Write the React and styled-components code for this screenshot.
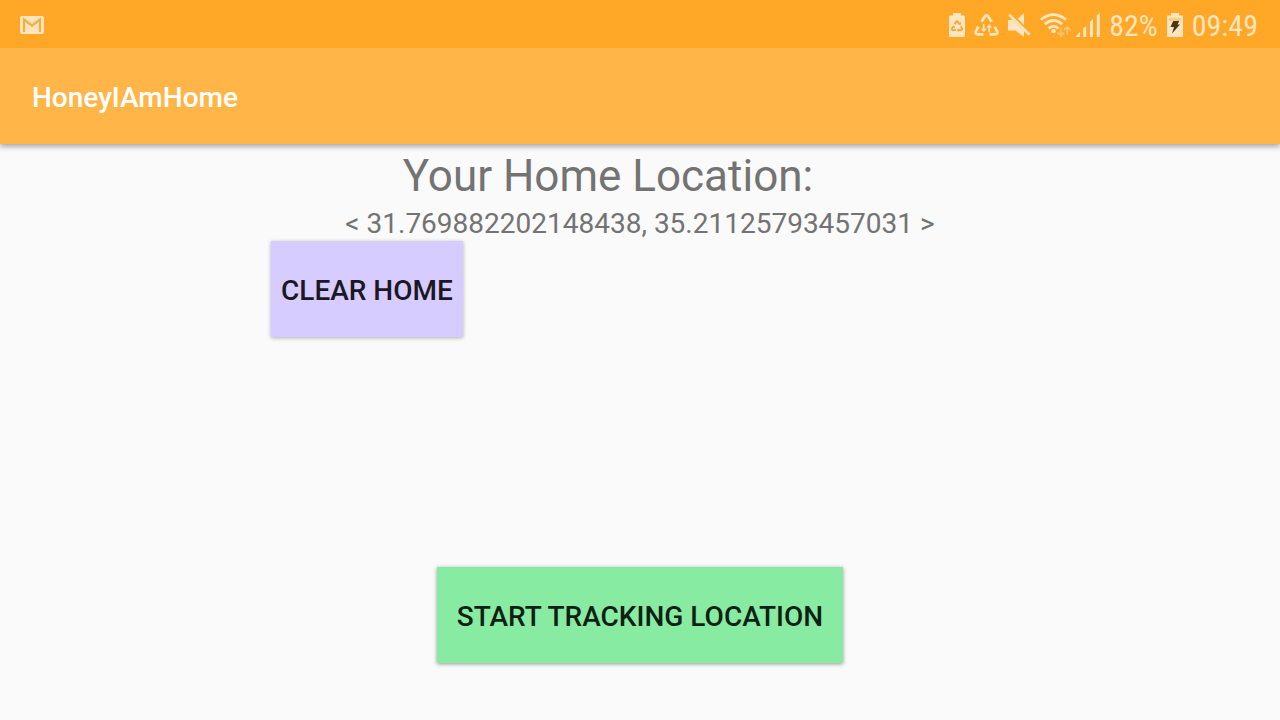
import React from "react";
import styled, { createGlobalStyle } from "styled-components";

const GlobalStyle = createGlobalStyle`
  *, *::before, *::after { box-sizing: border-box; }
  body {
    margin: 0;
    background: #fafafa;
    font-family: Roboto, "Liberation Sans", sans-serif;
  }
`;

const Screen = styled.div`
  min-height: 100vh;
  display: flex;
  flex-direction: column;
`;

const StatusBar = styled.div`
  position: relative;
  z-index: 1;
  height: 48px;
  padding: 2px 22px 0 20px;
  display: flex;
  align-items: center;
  justify-content: space-between;
  background: #ffa726;
  color: #ffe5be;
`;

const StatusGroup = styled.div`
  display: flex;
  align-items: center;
  gap: ${(p) => p.$gap}px;
`;

const StatusText = styled.span`
  padding-top: 2px;
  font-family: "Roboto Condensed", Roboto, sans-serif;
  font-size: 30px;
  line-height: 36px;
  font-weight: 400;
`;

const Icon = styled.svg`
  display: block;
  flex: none;
  fill: currentColor;
`;

const AppBar = styled.header`
  height: 96px;
  padding: 4px 32px 0;
  display: flex;
  align-items: center;
  background: #ffb548;
  box-shadow: 0 2px 6px rgba(0, 0, 0, 0.4);
`;

const AppTitle = styled.h1`
  margin: 0;
  color: #fff;
  font-size: 28px;
  line-height: 32px;
  font-weight: 500;
`;

const Main = styled.main`
  flex: 1;
  padding: 4px 16px 57px;
  display: flex;
  flex-direction: column;
  align-items: center;
`;

const Heading = styled.h2`
  margin: 0;
  padding-right: 64px;
  color: #737373;
  font-size: 44px;
  line-height: 56px;
  font-weight: 400;
`;

const Coordinates = styled.p`
  margin: 0;
  padding: 4px 0 1px;
  color: #737373;
  font-size: 28px;
  line-height: 32px;
  text-align: center;
`;

const ActionRow = styled.div`
  width: 100%;
  max-width: 738px;
  display: flex;
`;

const ActionButton = styled.button`
  height: 96px;
  padding: 4px ${(p) => p.$pad}px 0;
  border: 0;
  border-radius: 0;
  background: ${(p) => p.$fill};
  color: ${(p) => p.$ink};
  font-family: inherit;
  font-size: 28px;
  line-height: 32px;
  font-weight: 500;
  text-transform: uppercase;
  box-shadow: 0 1px 4px rgba(0, 0, 0, ${(p) => p.$shade});
  cursor: pointer;
`;

const TrackButton = styled(ActionButton)`
  margin-top: auto;
`;

const MailIcon = () => (
  <Icon width="24" height="20" viewBox="0 0 24 20" aria-label="Gmail">
    <rect x="0" y="1" width="24" height="18" rx="2" />
    <path d="M4 17V4.500l8 6 8-6V17" fill="none" stroke="#f6ae43" strokeWidth="2.200" />
  </Icon>
);

const BatteryRecycleIcon = () => (
  <Icon width="16" height="24" viewBox="0 0 16 24" aria-label="Battery saver">
    <path d="M4 0h8v2.500h3q1 0 1 1V23q0 1-1 1H1q-1 0-1-1V3.500q0-1 1-1h3z" />
    <g fill="none" stroke="#f3a638" strokeWidth="1.800" strokeLinejoin="round">
      <path d="M5.600 11.300L7.300 8.600Q8 7.800 8.700 8.600L10.200 11" />
      <path d="M11.800 13.200L13.100 15.700Q13.300 17 12.200 17.100H9.600" />
      <path d="M6.800 17.100H3.600Q2.500 17 2.900 15.700L4.200 13.600" />
    </g>
    <path d="M8.700 11.200l3 .8.400-3.200zM10.100 15v4.200L7.900 17.100zM2.500 13.700l3-1.200.6 3z" fill="#f3a638" />
  </Icon>
);

const RecycleIcon = () => (
  <Icon width="25" height="24" viewBox="0 0 25 24" aria-label="Data saver">
    <g fill="none" stroke="currentColor" strokeWidth="2.800" strokeLinejoin="round">
      <path d="M7.400 8.700L11 3.200Q12.500 1.600 14 3.200L17.600 8.700" />
      <path d="M20.600 13.600L23.100 18.300Q24 21.200 21 21.300H15.500" />
      <path d="M9.500 21.300H4Q1 21.200 1.900 18.300L4.400 13.600" />
    </g>
    <path d="M8.900 11h1.700v4.700h2l-2.850 3.500-2.850-3.500h2zM16.100 19.200h-1.700v-4.700h-2l2.850-3.500 2.850 3.500h-2z" />
  </Icon>
);

const MuteIcon = () => (
  <Icon width="23" height="24" viewBox="0 0 23 24" aria-label="Muted">
    <path d="M0 7h4.500L16 18V24L7.500 17.500H0zM16 0v12L9.800 5.800z" />
    <path d="M1.200 1.700L21.500 21.800" fill="none" stroke="currentColor" strokeWidth="2.700" />
  </Icon>
);

const WifiIcon = () => (
  <Icon width="31" height="24" viewBox="0 0 31 24" aria-label="Wi-Fi">
    <g fill="none" stroke="currentColor" strokeWidth="2.700">
      <path d="M1 6.700Q13.500-3.400 26 6.700" />
      <path d="M4.800 11.200Q13.500 3.800 22.200 11.200" />
      <path d="M8.700 15.400Q13.500 11 18.300 15.400" />
    </g>
    <circle cx="13.500" cy="18" r="2.300" />
    <g fill="none" stroke="currentColor" strokeWidth="1.800" opacity="0.45">
      <path d="M20.800 14.500v8M17.500 19.500l3.300 3.300 3.300-3.300" />
      <path d="M27.300 21.500v-8M24 17l3.300-3.300 3.300 3.300" />
    </g>
  </Icon>
);

const SignalIcon = () => (
  <Icon width="25" height="24" viewBox="0 0 25 24" aria-label="Signal">
    <path d="M0 24l5-5v5zM8.200 24V15.300l3-2.300v11zM15 24V8.500l3-2.500v18zM21.800 24V2.500L24.800 0v24z" />
  </Icon>
);

const BatteryIcon = () => (
  <Icon width="16" height="24" viewBox="0 0 16 24" aria-label="Charging">
    <path d="M4 0h8v2.500h3q1 0 1 1V23q0 1-1 1H1q-1 0-1-1V3.500q0-1 1-1h3z" />
    <path d="M2 5h12v3H2z" fill="#ffca7a" />
    <path d="M6.200 8h6L10.500 11.500H13L5 20.500l2-6.500H3.500z" fill="#4a3514" />
  </Icon>
);

export default function App() {
  return (
    <Screen>
      <GlobalStyle />
      <StatusBar>
        <MailIcon />
        <StatusGroup $gap={9}>
          <StatusGroup $gap={4}>
            <StatusGroup $gap={9}>
              <BatteryRecycleIcon />
              <RecycleIcon />
              <MuteIcon />
              <WifiIcon />
            </StatusGroup>
            <SignalIcon />
          </StatusGroup>
          <StatusText>82%</StatusText>
          <BatteryIcon />
          <StatusText>09:49</StatusText>
        </StatusGroup>
      </StatusBar>
      <AppBar>
        <AppTitle>HoneyIAmHome</AppTitle>
      </AppBar>
      <Main>
        <Heading>Your Home Location:</Heading>
        <Coordinates>&lt; 31.769882202148438, 35.21125793457031 &gt;</Coordinates>
        <ActionRow>
          <ActionButton $pad={10} $fill="#d6ccff" $ink="#1b1823" $shade={0.3}>
            Clear Home
          </ActionButton>
        </ActionRow>
        <TrackButton $pad={20} $fill="#88eba2" $ink="#0e1f14" $shade={0.4}>
          Start tracking location
        </TrackButton>
      </Main>
    </Screen>
  );
}
